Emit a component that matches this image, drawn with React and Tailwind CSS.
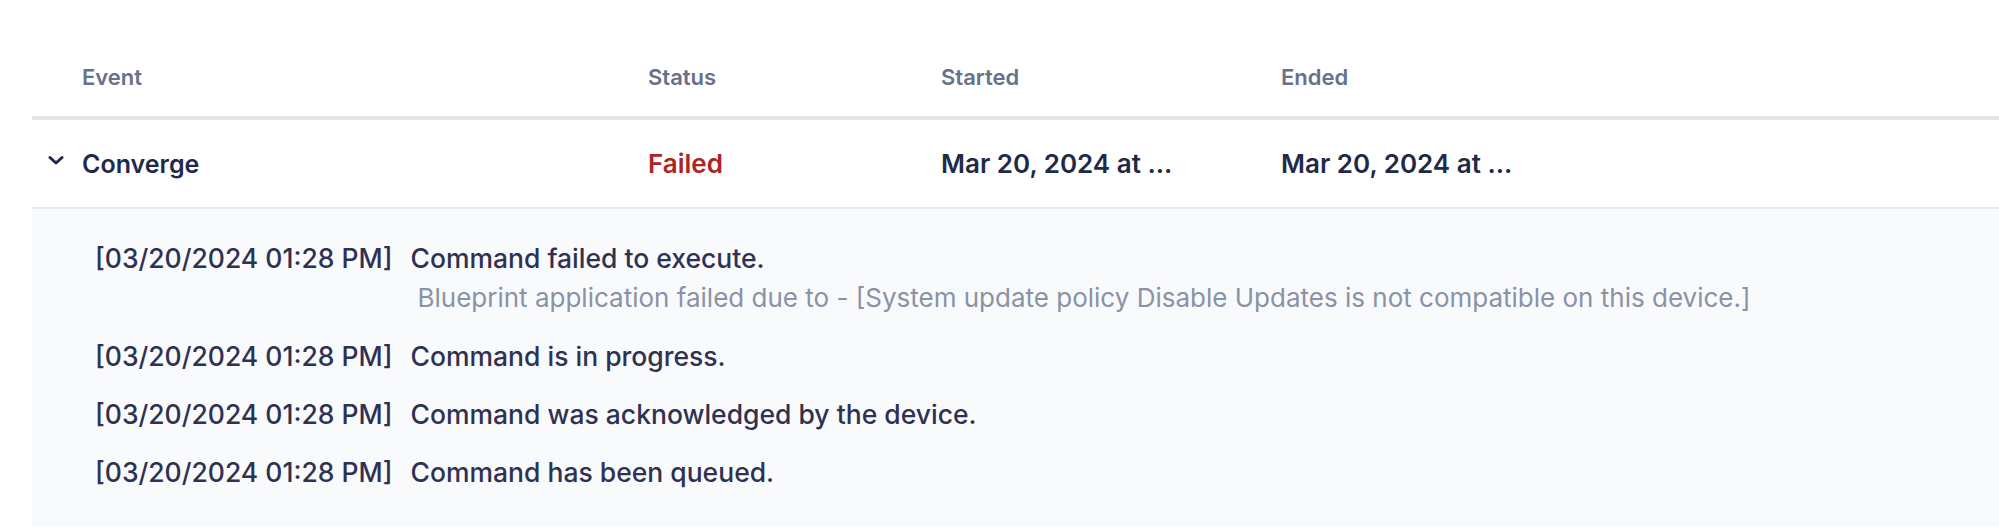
import React from "react";

const logs = [
  {
    time: "[03/20/2024 01:28 PM]",
    message: "Command failed to execute.",
    detail:
      "Blueprint application failed due to - [System update policy Disable Updates is not compatible on this device.]",
  },
  { time: "[03/20/2024 01:28 PM]", message: "Command is in progress." },
  { time: "[03/20/2024 01:28 PM]", message: "Command was acknowledged by the device." },
  { time: "[03/20/2024 01:28 PM]", message: "Command has been queued." },
];

function Chevron() {
  return (
    <svg width="16" height="10" viewBox="0 0 16 10" fill="none" className="shrink-0 mb-[7px]">
      <path
        d="M2 2.5 8 8l6-5.5"
        stroke="#1f2a48"
        strokeWidth="3"
        strokeLinecap="round"
        strokeLinejoin="round"
      />
    </svg>
  );
}

export default function App() {
  return (
    <div
      className="w-[1999px] h-[529px] bg-white overflow-hidden"
      style={{ fontFamily: "Inter, 'Noto Sans', sans-serif" }}
    >
      <div className="ml-[32px]">
        {/* header */}
        <div className="grid grid-cols-[616px_293px_340px_1fr] h-[120px] items-end pb-[25px] border-b-4 border-[#e3e4e9] text-[22px] leading-[28px] font-semibold text-[#67718a]">
          <div className="pl-[50px]">Event</div>
          <div>Status</div>
          <div>Started</div>
          <div>Ended</div>
        </div>

        {/* row */}
        <div className="grid grid-cols-[616px_293px_340px_1fr] h-[89px] items-center border-b-2 border-[#e9eaee] text-[26px] leading-[32px] font-semibold text-[#1f2a48]">
          <div className="flex items-center pl-[16px] gap-[18px]">
            <Chevron />
            <span className="text-[25px]">Converge</span>
          </div>
          <div className="text-[#b02323]">Failed</div>
          <div>Mar 20, 2024 at ...</div>
          <div>Mar 20, 2024 at ...</div>
        </div>

        {/* expanded log */}
        <div className="bg-[#f9fafc] h-[318px] pl-[63px] pt-[33px] flex flex-col gap-[26px] text-[26.5px] leading-[32px]">
          {logs.map((log, i) => (
            <div key={i} className="flex gap-[18px]">
              <span className="font-medium text-[#2f3152] whitespace-nowrap">{log.time}</span>
              <div className="flex flex-col gap-[8px]">
                <span className="font-medium text-[#2f3152]">{log.message}</span>
                {log.detail && (
                  <span className="ml-[7px] text-[26px] text-[#8a92a6] whitespace-nowrap">
                    {log.detail}
                  </span>
                )}
              </div>
            </div>
          ))}
        </div>
      </div>
    </div>
  );
}
